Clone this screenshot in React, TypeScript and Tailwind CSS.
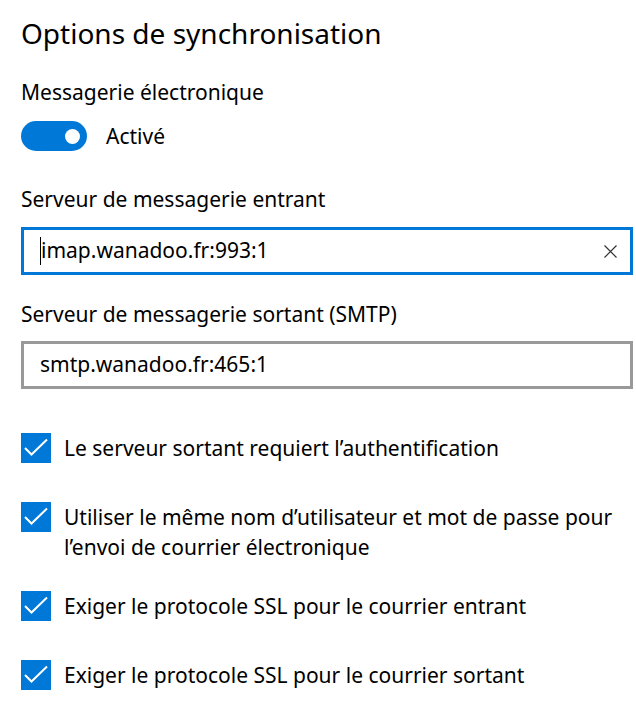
import React from "react";

const font = { fontFamily: '"Segoe UI", "Noto Sans", "Open Sans", sans-serif' };

const Check = () => (
  <div className="w-[30px] h-[30px] shrink-0 bg-[#0078d7]">
    <svg width="30" height="30" viewBox="0 0 30 30">
      <polyline points="4,15 10.5,21.5 26,6.5" fill="none" stroke="white" strokeWidth="2" />
    </svg>
  </div>
);

const CheckRow = ({ text, className }: { text: string; className: string }) => (
  <div className={"flex items-start gap-[13px] " + className}>
    <Check />
    <div className="text-[21px] leading-[30px] text-black">{text}</div>
  </div>
);

const App = () => {
  return (
    <div className="w-[636px] h-[712px] bg-white pl-[21px] pr-[3px] overflow-hidden" style={font}>
      <h1 className="pt-[13px] text-[28px] leading-[40px] text-black">Options de synchronisation</h1>

      <div className="mt-[24px] text-[21px] leading-[30px] text-black">Messagerie électronique</div>
      <div className="mt-[14px] flex items-center">
        <div className="w-[66px] h-[30px] rounded-full bg-[#0078d7] flex items-center justify-end pr-[7px]">
          <div className="w-[15px] h-[15px] rounded-full bg-white" />
        </div>
        <span className="ml-[19px] text-[21px] leading-[30px] text-black">Activé</span>
      </div>

      <div className="mt-[33px] text-[21px] leading-[30px] text-black">Serveur de messagerie entrant</div>
      <div className="mt-[13px] h-[48px] border-[3px] border-[#0078d7] flex items-center pl-[16px] pr-[13px]">
        <span className="w-px h-[28px] bg-black" />
        <span className="flex-1 text-[21px] text-black">imap.wanadoo.fr:993:1</span>
        <svg width="13" height="13" viewBox="0 0 13 13">
          <path d="M0.5 0.5 L12.5 12.5 M12.5 0.5 L0.5 12.5" stroke="#333" strokeWidth="1.2" />
        </svg>
      </div>

      <div className="mt-[24px] text-[21px] leading-[30px] text-black">Serveur de messagerie sortant (SMTP)</div>
      <div className="mt-[12px] h-[48px] border-[3px] border-[#999999] flex items-center pl-[16px] pr-[13px]">
        <span className="text-[21px] text-black">smtp.wanadoo.fr:465:1</span>
      </div>

      <CheckRow className="mt-[44px]" text="Le serveur sortant requiert l’authentification" />
      <CheckRow
        className="mt-[39px]"
        text="Utiliser le même nom d’utilisateur et mot de passe pour l’envoi de courrier électronique"
      />
      <CheckRow className="mt-[29px]" text="Exiger le protocole SSL pour le courrier entrant" />
      <CheckRow className="mt-[39px]" text="Exiger le protocole SSL pour le courrier sortant" />
    </div>
  );
};

export default App;
